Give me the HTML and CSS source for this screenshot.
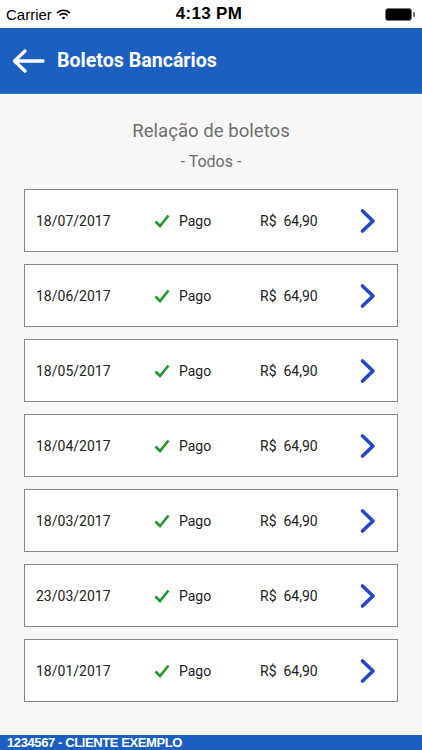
FILE: index.html
```html
<!DOCTYPE html>
<html lang="pt-BR">
<head>
  <meta charset="UTF-8">
  <meta name="viewport" content="width=device-width, initial-scale=1.0">
  <title>Boletos Bancários</title>
  <link rel="stylesheet" href="styles.css">
</head>
<body>
  <div id="statusBar">
    <div class="carrier">Carrier
      <svg class="wifi" width="15" height="11" viewBox="0 0 15 11">
        <path d="M1 4 A9 9 0 0 1 14 4" fill="none" stroke="#000" stroke-width="1.6"/>
        <path d="M3.4 6.4 A5.6 5.6 0 0 1 11.6 6.4" fill="none" stroke="#000" stroke-width="1.6"/>
        <path d="M5.6 8.6 L7.5 10.6 L9.4 8.6 A2.7 2.7 0 0 0 5.6 8.6 Z" fill="#000"/>
      </svg>
    </div>
    <div class="time">4:13 PM</div>
    <div class="battery"><span></span></div>
  </div>

  <div id="header">
    <svg class="back" width="34" height="26" viewBox="0 0 34 26">
      <path d="M32 13 H4 M14 3 L3.5 13 L14 23" fill="none" stroke="#fff" stroke-width="3.4" stroke-linecap="round" stroke-linejoin="round"/>
    </svg>
    <h1>Boletos Bancários</h1>
  </div>

  <div id="content">
    <h2>Relação de boletos</h2>
    <p class="filter">- Todos -</p>

    <div id="list">
      <div class="boleto">
        <span class="date">18/07/2017</span>
        <span class="status"><svg class="check" width="16" height="14" viewBox="0 0 16 14"><path d="M1.5 7.5 L6 12 L14.5 1.5" fill="none" stroke="#229a2a" stroke-width="2.6"/></svg>Pago</span>
        <span class="value">R$&nbsp; 64,90</span>
        <svg class="chevron" width="18" height="26" viewBox="0 0 18 26"><path d="M3.5 3 L14 13 L3.5 23" fill="none" stroke="#2446c8" stroke-width="3.6" stroke-linecap="round" stroke-linejoin="round"/></svg>
      </div>
      <div class="boleto">
        <span class="date">18/06/2017</span>
        <span class="status"><svg class="check" width="16" height="14" viewBox="0 0 16 14"><path d="M1.5 7.5 L6 12 L14.5 1.5" fill="none" stroke="#229a2a" stroke-width="2.6"/></svg>Pago</span>
        <span class="value">R$&nbsp; 64,90</span>
        <svg class="chevron" width="18" height="26" viewBox="0 0 18 26"><path d="M3.5 3 L14 13 L3.5 23" fill="none" stroke="#2446c8" stroke-width="3.6" stroke-linecap="round" stroke-linejoin="round"/></svg>
      </div>
      <div class="boleto">
        <span class="date">18/05/2017</span>
        <span class="status"><svg class="check" width="16" height="14" viewBox="0 0 16 14"><path d="M1.5 7.5 L6 12 L14.5 1.5" fill="none" stroke="#229a2a" stroke-width="2.6"/></svg>Pago</span>
        <span class="value">R$&nbsp; 64,90</span>
        <svg class="chevron" width="18" height="26" viewBox="0 0 18 26"><path d="M3.5 3 L14 13 L3.5 23" fill="none" stroke="#2446c8" stroke-width="3.6" stroke-linecap="round" stroke-linejoin="round"/></svg>
      </div>
      <div class="boleto">
        <span class="date">18/04/2017</span>
        <span class="status"><svg class="check" width="16" height="14" viewBox="0 0 16 14"><path d="M1.5 7.5 L6 12 L14.5 1.5" fill="none" stroke="#229a2a" stroke-width="2.6"/></svg>Pago</span>
        <span class="value">R$&nbsp; 64,90</span>
        <svg class="chevron" width="18" height="26" viewBox="0 0 18 26"><path d="M3.5 3 L14 13 L3.5 23" fill="none" stroke="#2446c8" stroke-width="3.6" stroke-linecap="round" stroke-linejoin="round"/></svg>
      </div>
      <div class="boleto">
        <span class="date">18/03/2017</span>
        <span class="status"><svg class="check" width="16" height="14" viewBox="0 0 16 14"><path d="M1.5 7.5 L6 12 L14.5 1.5" fill="none" stroke="#229a2a" stroke-width="2.6"/></svg>Pago</span>
        <span class="value">R$&nbsp; 64,90</span>
        <svg class="chevron" width="18" height="26" viewBox="0 0 18 26"><path d="M3.5 3 L14 13 L3.5 23" fill="none" stroke="#2446c8" stroke-width="3.6" stroke-linecap="round" stroke-linejoin="round"/></svg>
      </div>
      <div class="boleto">
        <span class="date">23/03/2017</span>
        <span class="status"><svg class="check" width="16" height="14" viewBox="0 0 16 14"><path d="M1.5 7.5 L6 12 L14.5 1.5" fill="none" stroke="#229a2a" stroke-width="2.6"/></svg>Pago</span>
        <span class="value">R$&nbsp; 64,90</span>
        <svg class="chevron" width="18" height="26" viewBox="0 0 18 26"><path d="M3.5 3 L14 13 L3.5 23" fill="none" stroke="#2446c8" stroke-width="3.6" stroke-linecap="round" stroke-linejoin="round"/></svg>
      </div>
      <div class="boleto">
        <span class="date">18/01/2017</span>
        <span class="status"><svg class="check" width="16" height="14" viewBox="0 0 16 14"><path d="M1.5 7.5 L6 12 L14.5 1.5" fill="none" stroke="#229a2a" stroke-width="2.6"/></svg>Pago</span>
        <span class="value">R$&nbsp; 64,90</span>
        <svg class="chevron" width="18" height="26" viewBox="0 0 18 26"><path d="M3.5 3 L14 13 L3.5 23" fill="none" stroke="#2446c8" stroke-width="3.6" stroke-linecap="round" stroke-linejoin="round"/></svg>
      </div>
    </div>
  </div>

  <div id="footer">1234567 - CLIENTE EXEMPLO</div>
</body>
</html>
```

FILE: styles.css
```css
  body {
    font-family: Roboto, "Liberation Sans", sans-serif;
    margin: 0;
    height: 750px;
    display: flex;
    flex-direction: column;
    background-color: #f7f7f7;
    overflow: hidden;
  }

  #statusBar {
    height: 28px;
    background-color: #fff;
    display: flex;
    align-items: center;
    justify-content: space-between;
    padding: 0 10px 0 6px;
    font-family: "Liberation Sans", Arial, sans-serif;
    color: #000;
  }

  .carrier {
    font-size: 15px;
    width: 100px;
    display: flex;
    align-items: center;
    gap: 4px;
  }

  .time {
    font-size: 17px;
    font-weight: bold;
    letter-spacing: 0.3px;
  }

  .battery {
    width: 100px;
    display: flex;
    justify-content: flex-end;
  }

  .battery span {
    display: block;
    width: 25px;
    height: 11px;
    background-color: #000;
    border: 1px solid #777;
    border-radius: 3px;
    position: relative;
  }

  .battery span::after {
    content: "";
    position: absolute;
    right: -4px;
    top: 3px;
    width: 2px;
    height: 5px;
    background-color: #777;
    border-radius: 0 1px 1px 0;
  }

  #header {
    height: 65px;
    background-color: #1b5fc1;
    border-bottom: 1px solid #3b7ad4;
    display: flex;
    align-items: center;
    padding-left: 11px;
    gap: 12px;
  }

  #header h1 {
    margin: 0;
    color: #fff;
    font-size: 19.6px;
    font-weight: bold;
  }

  #content {
    flex: 1;
    padding: 0 24px;
  }

  h2 {
    margin: 26px 0 0;
    text-align: center;
    font-weight: normal;
    font-size: 18.6px;
    color: #6e6e6e;
  }

  .filter {
    margin: 10px 0 0;
    text-align: center;
    font-size: 16px;
    color: #6e6e6e;
  }

  #list {
    margin-top: 18px;
    display: flex;
    flex-direction: column;
    gap: 12px;
  }

  .boleto {
    height: 61px;
    background-color: #fff;
    border: 1px solid #888;
    display: flex;
    align-items: center;
    padding: 0 20px 0 11px;
    font-size: 14px;
    color: #222;
  }

  .date {
    width: 118px;
  }

  .status {
    width: 106px;
    display: flex;
    align-items: center;
    gap: 9px;
  }

  .value {
    flex: 1;
  }

  #footer {
    height: 15px;
    background-color: #1b5fc1;
    color: #fff;
    font-family: "Liberation Sans", Arial, sans-serif;
    font-weight: bold;
    font-size: 13px;
    line-height: 15px;
    padding-left: 7px;
    letter-spacing: -0.4px;
  }
```
